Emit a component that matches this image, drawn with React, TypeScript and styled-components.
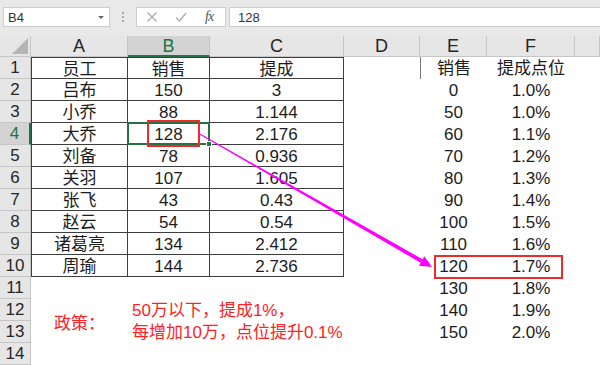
import React from 'react';
import styled, { createGlobalStyle } from 'styled-components';

const Global = createGlobalStyle`
  html, body { margin: 0; padding: 0; background: #fff; }
  body { width: 600px; height: 365px; overflow: hidden; }
`;

const FONT = `"Liberation Sans", "Noto Sans CJK SC", sans-serif`;
const GREEN = '#217346';
const RED = '#ee2b2b';

const Page = styled.div`
  position: relative;
  width: 600px;
  height: 365px;
  overflow: hidden;
  font-family: ${FONT};
`;

const Toolbar = styled.div`
  height: 36px;
  box-sizing: border-box;
  display: flex;
  align-items: flex-start;
  padding: 7px 0 0 3px;
  background: #e9e9e9;
`;

const NameBox = styled.div`
  width: 107px;
  height: 20px;
  box-sizing: border-box;
  background: #fff;
  border: 1px solid #cdcdcd;
  display: flex;
  align-items: center;
  justify-content: space-between;
  padding: 0 4px 0 4px;
  font: 13px ${FONT};
  color: #333;
`;

const DropArrow = styled.span`
  width: 0;
  height: 0;
  border-left: 3px solid transparent;
  border-right: 3px solid transparent;
  border-top: 3px solid #666;
  margin-right: 1px;
`;

const Grip = styled.div`
  width: 26px;
  height: 20px;
  display: flex;
  flex-direction: column;
  align-items: center;
  justify-content: center;
  gap: 2px;
`;

const Dot = styled.span`
  width: 2px;
  height: 2px;
  background: #a8a8a8;
`;

const FxBox = styled.div`
  width: 90px;
  height: 20px;
  box-sizing: border-box;
  background: #fff;
  border: 1px solid #cdcdcd;
  display: flex;
  align-items: center;
  padding-left: 9px;
  gap: 17px;
`;

const FxLabel = styled.span`
  font: italic 14px "Liberation Serif", serif;
  color: #555;
  margin-left: 1px;
  letter-spacing: -1px;
`;

const ValueBox = styled.div`
  flex: 1;
  margin-left: 3px;
  height: 20px;
  box-sizing: border-box;
  background: #fff;
  border: 1px solid #cdcdcd;
  border-right: none;
  display: flex;
  align-items: center;
  padding-left: 8px;
  font: 13px ${FONT};
  color: #333;
`;

const Sheet = styled.div`
  display: grid;
  grid-template-columns: 31px 97px 82px 134px 76px 67px 88px 1fr;
  grid-template-rows: 21px repeat(14, 22px);
  background: #fff;
`;

const Corner = styled.div`
  background: #e6e6e6;
  border-right: 1px solid #c6c6c6;
  border-bottom: 1px solid #c6c6c6;
  box-sizing: border-box;
  display: flex;
  align-items: flex-end;
  justify-content: flex-end;
  padding: 0 2px 2px 0;
`;

const ColHead = styled.div<{ $active?: boolean }>`
  box-sizing: border-box;
  background: ${(p) => (p.$active ? '#d3d3d3' : '#e6e6e6')};
  color: ${(p) => (p.$active ? GREEN : '#262626')};
  border-right: 1px solid #c6c6c6;
  border-bottom: ${(p) => (p.$active ? `2px solid ${GREEN}` : '1px solid #c6c6c6')};
  font-size: 18px;
  line-height: 21px;
  text-align: center;
`;

const RowHead = styled.div<{ $active?: boolean }>`
  box-sizing: border-box;
  background: ${(p) => (p.$active ? '#d3d3d3' : '#e6e6e6')};
  color: ${(p) => (p.$active ? GREEN : '#262626')};
  border-right: ${(p) => (p.$active ? `2px solid ${GREEN}` : '1px solid #c6c6c6')};
  border-bottom: 1px solid #c6c6c6;
  font-size: 17px;
  line-height: 20px;
  padding-top: 1px;
  text-align: center;
`;

const Cell = styled.div<{
  $table?: boolean;
  $top?: boolean;
  $left?: boolean;
  $mark?: boolean;
  $red?: boolean;
  $align?: 'left' | 'center';
}>`
  position: relative;
  box-sizing: border-box;
  font-size: 17px;
  line-height: 20px;
  padding-top: 2px;
  color: ${(p) => (p.$red ? '#f22' : '#1c1c1c')};
  text-align: ${(p) => p.$align || 'center'};
  padding-left: ${(p) => (p.$align === 'left' ? '4px' : '0')};
  white-space: nowrap;
  overflow: visible;
  border-right: ${(p) => (p.$table ? '1px solid #3e3e3e' : 'none')};
  border-bottom: ${(p) => (p.$table ? '1px solid #3e3e3e' : 'none')};
  border-top: ${(p) => (p.$top ? '1px solid #3e3e3e' : 'none')};
  border-left: ${(p) =>
    p.$left ? '1px solid #3e3e3e' : p.$mark ? '1px solid #7a7a7a' : 'none'};
`;

const Merged = styled.div`
  grid-row: span 2;
  display: flex;
  align-items: center;
  justify-content: center;
  font-size: 17px;
  color: #f22;
  padding-top: 1px;
`;

const Selection = styled.div`
  position: absolute;
  top: -1px;
  left: -1px;
  right: -1px;
  bottom: -1px;
  border: 2px solid ${GREEN};
  z-index: 1;
`;

const Handle = styled.span`
  position: absolute;
  right: -4px;
  bottom: -4px;
  width: 4px;
  height: 4px;
  background: ${GREEN};
  border: 1px solid #fff;
`;

const Overlay = styled.svg`
  position: absolute;
  left: 0;
  top: 0;
  width: 600px;
  height: 365px;
  pointer-events: none;
  z-index: 2;
`;

const colA = ['员工', '吕布', '小乔', '大乔', '刘备', '关羽', '张飞', '赵云', '诸葛亮', '周瑜'];
const colB = ['销售', '150', '88', '128', '78', '107', '43', '54', '134', '144'];
const colC = ['提成', '3', '1.144', '2.176', '0.936', '1.605', '0.43', '0.54', '2.412', '2.736'];
const colE = ['销售', '0', '50', '60', '70', '80', '90', '100', '110', '120', '130', '140', '150'];
const colF = [
  '提成点位', '1.0%', '1.0%', '1.1%', '1.2%', '1.3%', '1.4%',
  '1.5%', '1.6%', '1.7%', '1.8%', '1.9%', '2.0%',
];
const letters = ['A', 'B', 'C', 'D', 'E', 'F', ''];

export default function App() {
  const rows: React.ReactNode[] = [];
  for (let r = 1; r <= 14; r++) {
    const i = r - 1;
    const inTable = r <= 10;
    rows.push(
      <RowHead key={`h${r}`} $active={r === 4}>
        {r}
      </RowHead>
    );
    if (r === 12) {
      rows.push(<Merged key="policy">政策：</Merged>);
    } else if (r !== 13) {
      rows.push(
        <Cell key={`a${r}`} $table={inTable} $top={r === 1} $left={inTable}>
          {inTable ? colA[i] : ''}
        </Cell>
      );
    }
    if (r === 12 || r === 13) {
      rows.push(
        <Cell key={`b${r}`} $red $align="left">
          {r === 12 ? '50万以下，提成1%，' : '每增加10万，点位提升0.1%'}
        </Cell>
      );
    } else {
      rows.push(
        <Cell key={`b${r}`} $table={inTable} $top={r === 1}>
          {inTable ? colB[i] : ''}
          {r === 4 && (
            <Selection>
              <Handle />
            </Selection>
          )}
        </Cell>
      );
    }
    rows.push(
      <Cell key={`c${r}`} $table={inTable} $top={r === 1}>
        {inTable ? colC[i] : ''}
      </Cell>
    );
    rows.push(<Cell key={`d${r}`} />);
    rows.push(
      <Cell key={`e${r}`} $mark={r === 1}>
        {colE[i] || ''}
      </Cell>
    );
    rows.push(<Cell key={`f${r}`}>{colF[i] || ''}</Cell>);
    rows.push(<Cell key={`g${r}`} />);
  }

  return (
    <Page>
      <Global />
      <Toolbar>
        <NameBox>
          <span>B4</span>
          <DropArrow />
        </NameBox>
        <Grip>
          <Dot />
          <Dot />
          <Dot />
        </Grip>
        <FxBox>
          <svg width="12" height="12" viewBox="0 0 12 12">
            <path d="M1.5 1.5 L10.5 10.5 M10.5 1.5 L1.5 10.5" stroke="#a9a9a9" strokeWidth="1.2" fill="none" />
          </svg>
          <svg width="12" height="12" viewBox="0 0 12 12">
            <path d="M1 6.5 L4.5 10 L11 2" stroke="#a9a9a9" strokeWidth="1.2" fill="none" />
          </svg>
          <FxLabel>fx</FxLabel>
        </FxBox>
        <ValueBox>128</ValueBox>
      </Toolbar>
      <Sheet>
        <Corner>
          <svg width="16" height="16" viewBox="0 0 16 16">
            <polygon points="16,0 16,16 0,16" fill="#b5b5b5" />
          </svg>
        </Corner>
        {letters.map((l, k) => (
          <ColHead key={`col${k}`} $active={l === 'B'}>
            {l}
          </ColHead>
        ))}
        {rows}
      </Sheet>
      <Overlay viewBox="0 0 600 365">
        <rect x="148" y="121" width="51" height="25" fill="none" stroke={RED} strokeWidth="2" />
        <rect x="435" y="256" width="127" height="22" fill="none" stroke={RED} strokeWidth="2" />
        <polygon
          points="197.75,133.43 198.25,132.57 422.6,259.3 420.6,262.7"
          fill="#f0f"
        />
        <polygon points="432,267 418.9,265.8 424.3,256.2" fill="#f0f" />
      </Overlay>
    </Page>
  );
}
